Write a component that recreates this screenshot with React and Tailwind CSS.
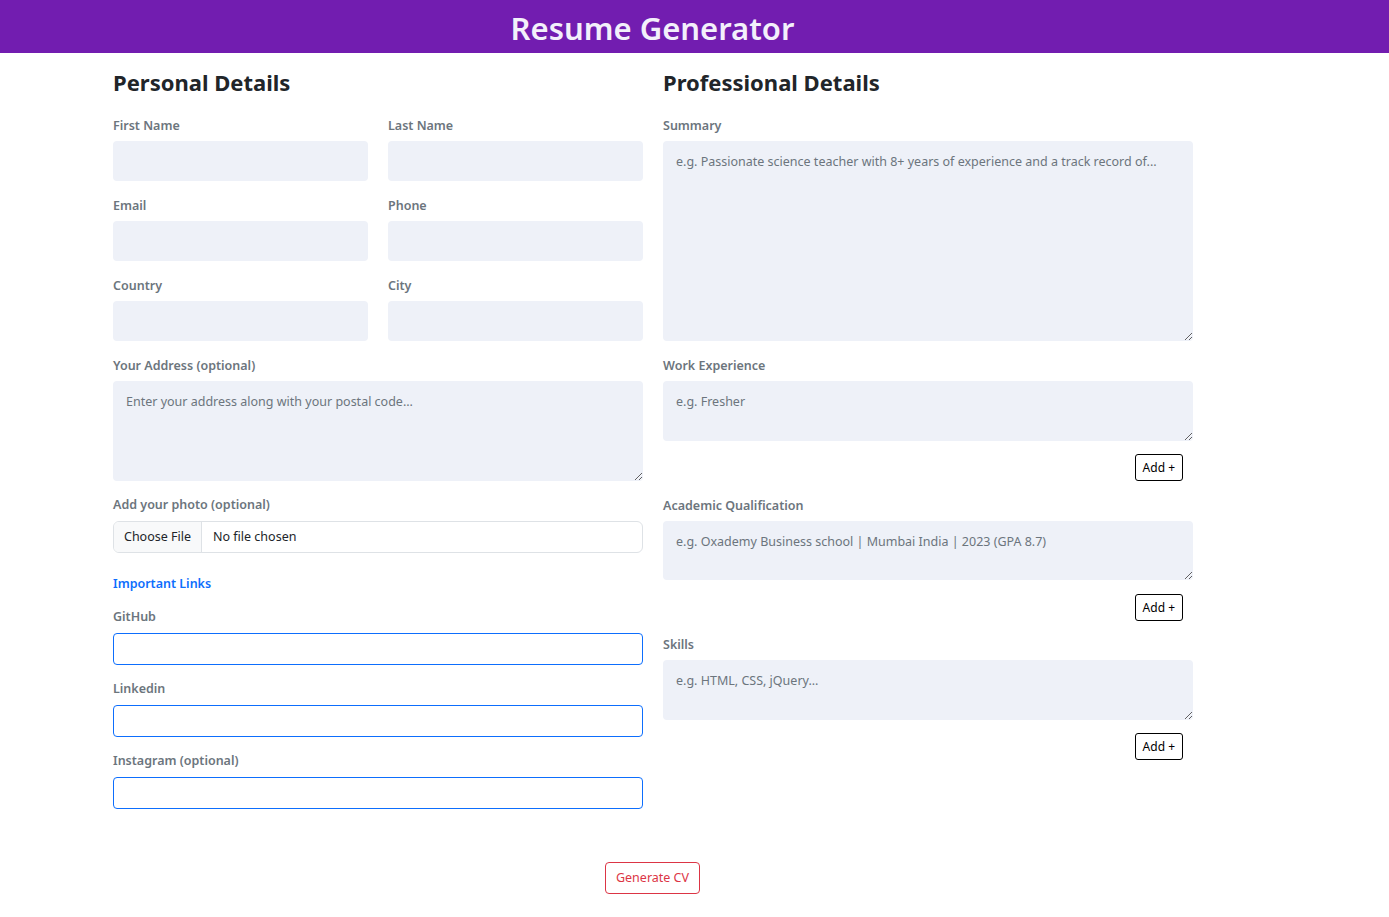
const font = { fontFamily: '"Noto Sans", "Open Sans", sans-serif' };

function Label({ children, className = "" }) {
    return (
        <label className={`block h-[18px] text-[12.5px] leading-[20px] font-semibold text-[#6c757d] ${className}`}>
            {children}
        </label>
    );
}

function Field({ label, className = "" }) {
    return (
        <div className={className}>
            <Label>{label}</Label>
            <input className="mt-[7px] block w-full h-[40px] bg-[#eef1f8] rounded-[4px] outline-none" />
        </div>
    );
}

function Area({ label, placeholder, h, className = "" }) {
    return (
        <div className={className}>
            <Label>{label}</Label>
            <textarea
                placeholder={placeholder}
                className={`mt-[7px] block w-full ${h} bg-[#eef1f8] rounded-[4px] outline-none px-[13px] pt-[12px] pb-[10px] text-[12.5px] leading-[18px] placeholder:text-[#6c757d]`}
            />
        </div>
    );
}

function AddButton({ className = "" }) {
    return (
        <div className={`flex justify-end pr-[10px] ${className}`}>
            <button className="h-[27px] px-[7px] border border-black rounded-[3px] text-[12px] text-black bg-white">
                Add +
            </button>
        </div>
    );
}

function LinkInput({ label, className = "" }) {
    return (
        <div className={className}>
            <Label>{label}</Label>
            <input className="mt-[8px] block w-full h-[32px] border border-[#0d6efd] rounded-[4px] outline-none" />
        </div>
    );
}

export default function App() {
    return (
        <div className="min-h-screen bg-white text-[#212529]" style={font}>
            <header className="h-[53px] bg-[#721db0] flex items-center">
                <div className="w-[1305px] text-center pt-[4px]">
                    <h1 className="text-[31px] leading-[49px] font-semibold text-[#f3f0fb]">
                        Resume Generator
                    </h1>
                </div>
            </header>

            <main className="ml-[113px] w-[1080px]">
                <div className="grid grid-cols-2 gap-x-[20px]">
                    {/* left column */}
                    <section>
                        <h2 className="mt-[15px] h-[29px] text-[22px] leading-[29px] font-bold text-[#212529]">
                            Personal Details
                        </h2>
                        <div className="mt-[19px] grid grid-cols-2 gap-x-[20px] gap-y-[15px]">
                            <Field label="First Name" />
                            <Field label="Last Name" />
                            <Field label="Email" />
                            <Field label="Phone" />
                            <Field label="Country" />
                            <Field label="City" />
                        </div>
                        <Area
                            className="mt-[15px]"
                            label="Your Address (optional)"
                            placeholder="Enter your address along with your postal code..."
                            h="h-[100px]"
                        />
                        <div className="mt-[14px]">
                            <Label>Add your photo (optional)</Label>
                            <div className="mt-[8px] flex h-[32px] border border-[#dee2e6] rounded-[6px] overflow-hidden text-[12.5px]">
                                <span className="w-[88px] flex items-center justify-center bg-[#f8f9fa] border-r border-[#dee2e6] text-[#212529]">
                                    Choose File
                                </span>
                                <span className="flex items-center pl-[11px] text-[#212529]">No file chosen</span>
                            </div>
                        </div>
                        <div className="mt-[21px] h-[18px] text-[12.5px] leading-[20px] font-semibold text-[#0d6efd]">
                            Important Links
                        </div>
                        <LinkInput className="mt-[15px]" label="GitHub" />
                        <LinkInput className="mt-[14px]" label="Linkedin" />
                        <LinkInput className="mt-[14px]" label="Instagram (optional)" />
                    </section>

                    {/* right column */}
                    <section>
                        <h2 className="mt-[15px] h-[29px] text-[22px] leading-[29px] font-bold text-[#212529]">
                            Professional Details
                        </h2>
                        <Area
                            className="mt-[19px]"
                            label="Summary"
                            placeholder="e.g. Passionate science teacher with 8+ years of experience and a track record of..."
                            h="h-[200px]"
                        />
                        <Area
                            className="mt-[15px]"
                            label="Work Experience"
                            placeholder="e.g. Fresher"
                            h="h-[60px]"
                        />
                        <AddButton className="mt-[13px]" />
                        <Area
                            className="mt-[15px]"
                            label="Academic Qualification"
                            placeholder="e.g. Oxademy Business school | Mumbai India | 2023 (GPA 8.7)"
                            h="h-[59px]"
                        />
                        <AddButton className="mt-[14px]" />
                        <Area
                            className="mt-[14px]"
                            label="Skills"
                            placeholder="e.g. HTML, CSS, jQuery..."
                            h="h-[60px]"
                        />
                        <AddButton className="mt-[13px]" />
                    </section>
                </div>
            </main>

            <div className="w-[1305px] flex justify-center mt-[53px] pb-[23px]">
                <button className="h-[32px] px-[10px] border border-[#dc3545] rounded-[4px] text-[12.5px] text-[#dc3545] bg-white">
                    Generate CV
                </button>
            </div>
        </div>
    );
}
